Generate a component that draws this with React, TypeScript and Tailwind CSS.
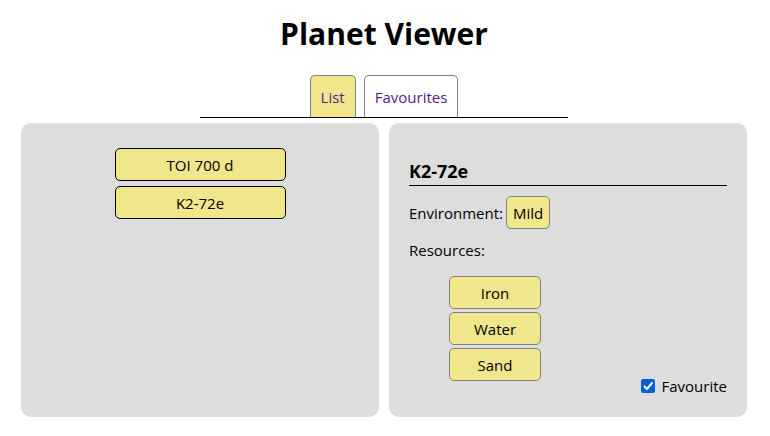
import { useState } from "react";

const planets = ["TOI 700 d", "K2-72e"];
const resources = ["Iron", "Water", "Sand"];

function Tab({ label, active = false }: { label: string; active?: boolean }) {
  return (
    <a
      href="#"
      className={`flex h-[42px] items-center rounded-t-[5px] border border-b-0 border-[#808080] px-[10px] text-[#551a8b] ${
        active ? "bg-[#f0e68c]" : "bg-white"
      }`}
    >
      {label}
    </a>
  );
}

function PlanetList() {
  return (
    <section className="flex-1 rounded-[10px] bg-[#dddddd] px-5 pt-[25px] pb-5">
      <ul className="flex flex-col items-center gap-[5px]">
        {planets.map((name) => (
          <li key={name}>
            <button
              type="button"
              className="h-[33px] w-[171px] rounded-[5px] border border-black bg-[#f0e68c] text-center"
            >
              {name}
            </button>
          </li>
        ))}
      </ul>
    </section>
  );
}

function PlanetDetails() {
  const [favourite, setFavourite] = useState(true);
  return (
    <section className="flex-1 rounded-[10px] bg-[#dddddd] px-5 pt-9 pb-5">
      <h2 className="border-b border-black pb-[2px] text-[18px] leading-6 font-bold">K2-72e</h2>
      <p className="mt-[10px] flex items-center gap-[3px]">
        Environment:
        <span className="flex h-[33px] items-center rounded-[5px] border border-[#808080] bg-[#f0e68c] px-[6px]">
          Mild
        </span>
      </p>
      <p className="mt-[10px]">Resources:</p>
      <div className="mt-[15px] flex items-end justify-between">
        <ul className="flex flex-col gap-[3px] pb-4 pl-10">
          {resources.map((name) => (
            <li
              key={name}
              className="flex h-[33px] w-[92px] items-center justify-center rounded-[5px] border border-[#808080] bg-[#f0e68c]"
            >
              {name}
            </li>
          ))}
        </ul>
        <label className="flex items-center gap-[7px]">
          <span className="relative flex">
            <input
              type="checkbox"
              checked={favourite}
              onChange={(e) => setFavourite(e.target.checked)}
              className="peer size-[14px] appearance-none rounded-[2px] border border-[#8f8f9d] bg-white checked:border-[#0060df] checked:bg-[#0060df]"
            />
            <svg
              viewBox="0 0 14 14"
              className="pointer-events-none absolute inset-0 hidden size-[14px] peer-checked:block"
              fill="none"
              stroke="white"
              strokeWidth="2"
              strokeLinecap="round"
              strokeLinejoin="round"
            >
              <path d="M3.5 7.5 6 10l5-6" />
            </svg>
          </span>
          Favourite
        </label>
      </div>
    </section>
  );
}

export default function App() {
  return (
    <main className="bg-white pt-3 pr-[23px] pb-5 pl-[21px] font-['Segoe_UI','Open_Sans',sans-serif] text-[15px] leading-[22px] text-black">
      <h1 className="text-center text-[30px] leading-[43px] font-bold">Planet Viewer</h1>
      <nav className="mx-auto mt-5 flex max-w-[368px] justify-center gap-2 border-b border-black">
        <Tab label="List" active />
        <Tab label="Favourites" />
      </nav>
      <div className="mt-[5px] flex gap-[10px]">
        <PlanetList />
        <PlanetDetails />
      </div>
    </main>
  );
}
